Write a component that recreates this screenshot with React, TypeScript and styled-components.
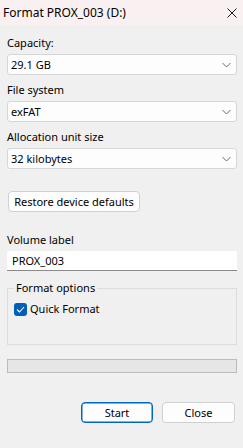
import styled, { createGlobalStyle } from 'styled-components';

const GlobalStyle = createGlobalStyle`
  html, body {
    margin: 0;
    padding: 0;
    background: #f0f0f0;
  }
  body {
    font-family: "Noto Sans", "Open Sans", sans-serif;
    font-size: 11px;
    color: #000;
  }
`;

const Window = styled.div`
  width: 243px;
  height: 448px;
  display: flex;
  flex-direction: column;
  background: #f0f0f0;
  overflow: hidden;
`;

const TitleBar = styled.div`
  height: 25px;
  flex-shrink: 0;
  display: flex;
  align-items: center;
  justify-content: space-between;
  padding: 0 6px 0 3px;
  background: #f9f1f1;
`;

const Title = styled.span`
  font-size: 12px;
  line-height: 16px;
  color: #000;
  margin-top: 1px;
`;

const CloseIcon = styled.svg`
  width: 10px;
  height: 10px;
  margin-top: 1px;
`;

const Body = styled.div`
  display: flex;
  flex-direction: column;
  padding: 10px 6px 0 7px;
`;

const Fields = styled.div`
  display: flex;
  flex-direction: column;
  gap: 7px;
`;

const Field = styled.div`
  display: flex;
  flex-direction: column;
  gap: 3px;
`;

const Label = styled.div`
  line-height: 16px;
  height: 16px;
  white-space: nowrap;
`;

const Combo = styled.div`
  height: 21px;
  box-sizing: border-box;
  display: flex;
  align-items: center;
  justify-content: space-between;
  padding: 0 5px 0 3px;
  background: #fdfdfd;
  border: 1px solid #d6d6d6;
  border-radius: 3px;
`;

const ComboText = styled.span`
  line-height: 16px;
`;

const Chevron = styled.svg`
  width: 9px;
  height: 6px;
`;

const Button = styled.button<{ $primary?: boolean; $width?: number }>`
  height: 21px;
  box-sizing: border-box;
  width: ${({ $width }) => ($width ? `${$width}px` : 'auto')};
  padding: 0;
  white-space: nowrap;
  font-family: inherit;
  font-size: 11px;
  line-height: 16px;
  color: #000;
  background: #fdfdfd;
  border: 1px solid ${({ $primary }) => ($primary ? '#0067c0' : '#d0d0d0')};
  border-radius: 4px;
  ${({ $primary }) => $primary && 'box-shadow: inset 0 0 0 0.5px #0067c0;'}
`;

const RestoreRow = styled.div`
  display: flex;
  margin-top: 22px;
  padding-left: 1px;
`;

const VolumeField = styled(Field)`
  margin-top: 20px;
`;

const TextInput = styled.div`
  height: 20px;
  box-sizing: border-box;
  display: flex;
  align-items: center;
  padding: 0 5px;
  background: #ffffff;
  border-bottom: 1px solid #8a8a8a;
  line-height: 16px;
`;

const Group = styled.fieldset`
  margin: 9px 0 0;
  padding: 4px 6px 0;
  height: 65px;
  box-sizing: border-box;
  border: 1px solid #dcdcdc;
  border-radius: 0;
`;

const Legend = styled.legend`
  padding: 0 2px;
  line-height: 16px;
  margin-left: 0;
`;

const CheckRow = styled.label`
  display: flex;
  align-items: center;
  gap: 3px;
  margin-top: 1px;
  line-height: 16px;
`;

const Check = styled.span`
  width: 13px;
  height: 13px;
  border-radius: 3px;
  background: #005fb8;
  display: flex;
  align-items: center;
  justify-content: center;
`;

const Progress = styled.div`
  margin-top: 14px;
  height: 14px;
  box-sizing: border-box;
  background: #e6e6e6;
  border: 1px solid #bcbcbc;
`;

const Footer = styled.div`
  display: flex;
  justify-content: flex-end;
  gap: 9px;
  margin-top: 29px;
  padding-right: 2px;
`;

const ComboBox = ({ value }: { value: string }) => (
  <Combo>
    <ComboText>{value}</ComboText>
    <Chevron viewBox="0 0 9 6">
      <path d="M0.5 1 L4.5 5 L8.5 1" fill="none" stroke="#6a6a6a" strokeWidth="1" />
    </Chevron>
  </Combo>
);

export default function App() {
  return (
    <Window>
      <GlobalStyle />
      <TitleBar>
        <Title>Format PROX_003 (D:)</Title>
        <CloseIcon viewBox="0 0 10 10">
          <path d="M0.5 0.5 L9.5 9.5 M9.5 0.5 L0.5 9.5" stroke="#1b1b1b" strokeWidth="1" />
        </CloseIcon>
      </TitleBar>
      <Body>
        <Fields>
          <Field>
            <Label>Capacity:</Label>
            <ComboBox value="29.1 GB" />
          </Field>
          <Field>
            <Label>File system</Label>
            <ComboBox value="exFAT" />
          </Field>
          <Field>
            <Label>Allocation unit size</Label>
            <ComboBox value="32 kilobytes" />
          </Field>
        </Fields>
        <RestoreRow>
          <Button $width={132}>Restore device defaults</Button>
        </RestoreRow>
        <VolumeField>
          <Label>Volume label</Label>
          <TextInput>PROX_003</TextInput>
        </VolumeField>
        <Group>
          <Legend>Format options</Legend>
          <CheckRow>
            <Check>
              <svg width="9" height="7" viewBox="0 0 9 7">
                <path d="M1 3.5 L3.5 6 L8 1" fill="none" stroke="#fff" strokeWidth="1.1" />
              </svg>
            </Check>
            Quick Format
          </CheckRow>
        </Group>
        <Progress />
        <Footer>
          <Button $primary $width={72}>Start</Button>
          <Button $width={73}>Close</Button>
        </Footer>
      </Body>
    </Window>
  );
}
